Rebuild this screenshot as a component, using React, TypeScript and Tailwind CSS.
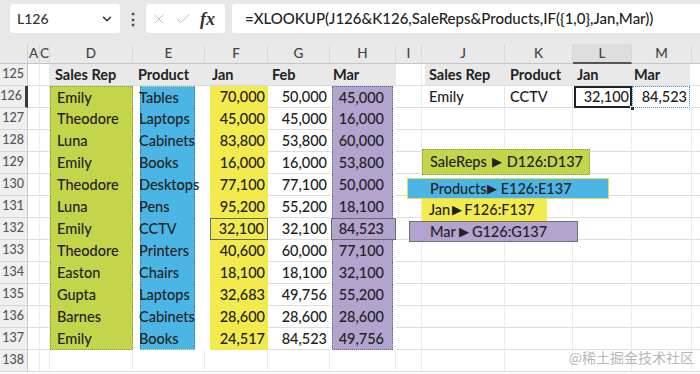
import React from "react";
import { ChevronDown, X, Check } from "lucide-react";

const GRID =
  "grid grid-cols-[28px_12px_10px_83px_72px_63px_62px_66px_26px_83px_68px_59px_60px_8px]";

const data: string[][] = [
  ["Emily", "Tables", "70,000", "50,000", "45,000"],
  ["Theodore", "Laptops", "45,000", "45,000", "16,000"],
  ["Luna", "Cabinets", "83,800", "53,800", "60,000"],
  ["Emily", "Books", "16,000", "16,000", "53,800"],
  ["Theodore", "Desktops", "77,100", "77,100", "50,000"],
  ["Luna", "Pens", "95,200", "55,200", "18,100"],
  ["Emily", "CCTV", "32,100", "32,100", "84,523"],
  ["Theodore", "Printers", "40,600", "60,000", "77,100"],
  ["Easton", "Chairs", "18,100", "18,100", "32,100"],
  ["Gupta", "Laptops", "32,683", "49,756", "55,200"],
  ["Barnes", "Cabinets", "28,600", "28,600", "28,600"],
  ["Emily", "Books", "24,517", "84,523", "49,756"],
];

function RowHead({ n, sel }: { n: number; sel?: boolean }) {
  return (
    <div
      className={
        "h-[22px] bg-[#efefef] border-b border-[#d6d6d6] flex items-center justify-end pr-[3px] text-[12.5px] text-[#555] " +
        (sel ? "border-r-[3px] border-r-[#3a3a3a]" : "border-r border-r-[#c9c9c9]")
      }
    >
      {n}
    </div>
  );
}

function Blank({ noRight }: { noRight?: boolean }) {
  return (
    <div
      className={
        "h-[22px] border-b border-[#dedede] " + (noRight ? "" : "border-r border-r-[#ececec]")
      }
    />
  );
}

function ColHead({ l, sel }: { l: string; sel?: boolean }) {
  return (
    <div
      className={
        "h-[20px] flex items-center justify-center text-[13.5px] text-[#444] border-r border-r-[#d9d9d9] " +
        (sel ? "bg-[#dedede] border-b-2 border-b-[#555]" : "border-b border-b-[#c6c2d2]")
      }
    >
      {l}
    </div>
  );
}

export default function App() {
  return (
    <div className="w-[700px] h-[374px] overflow-hidden relative bg-white font-['Lato',sans-serif] font-medium text-[#222]">
      {/* formula bar */}
      <div className="h-[44px] bg-[#e8e8e8] flex items-start pt-[4px] pl-[10px]">
        <div className="w-[110px] h-[29px] bg-white rounded-[3px] flex items-center justify-between pl-[7px] pr-[6px]">
          <span className="text-[14px] text-[#333]">L126</span>
          <ChevronDown size={14} strokeWidth={2.6} color="#333" />
        </div>
        <div className="w-[26px] h-[29px] flex items-center justify-center text-[16px] font-bold text-[#444]">⋮</div>
        <div className="w-[79px] h-[29px] bg-white rounded-[3px] flex items-center pl-[5px]">
          <X size={16} strokeWidth={1.2} color="#b4b4b4" />
          <Check size={18} strokeWidth={1.2} color="#b4b4b4" className="ml-[7px]" />
          <span className="ml-[8px] font-['Liberation_Serif',serif] italic font-bold text-[18px] text-[#333] leading-none">
            fx
          </span>
        </div>
        <div className="ml-[7px] flex-1 h-[29px] bg-white rounded-l-[3px] flex items-center pl-[13px] text-[15px] text-[#222] whitespace-nowrap">
          =XLOOKUP(J126&amp;K126,SaleReps&amp;Products,IF({"{"}1,0{"}"},Jan,Mar))
        </div>
      </div>

      {/* column headers */}
      <div className={GRID + " bg-[#e9e9e9]"}>
        <div className="h-[20px] border-b border-b-[#c6c2d2] border-r border-r-[#d0d0d0]" />
        <ColHead l="A" />
        <ColHead l="C" />
        <ColHead l="D" />
        <ColHead l="E" />
        <ColHead l="F" />
        <ColHead l="G" />
        <ColHead l="H" />
        <ColHead l="I" />
        <ColHead l="J" />
        <ColHead l="K" />
        <ColHead l="L" sel />
        <ColHead l="M" />
        <div className="h-[20px] border-b border-b-[#c6c2d2]" />
      </div>

      {/* row 125 */}
      <div className={GRID}>
        <RowHead n={125} />
        <Blank />
        <Blank />
        <div className="h-[22px] bg-[#e9e9e9] border-b border-[#d8d8d8] flex items-center pl-[5px] text-[14.5px] font-bold">Sales Rep</div>
        <div className="h-[22px] bg-[#e9e9e9] border-b border-[#d8d8d8] flex items-center pl-[5px] text-[14.5px] font-bold">Product</div>
        <div className="h-[22px] bg-[#e9e9e9] border-b border-[#d8d8d8] flex items-center pl-[7px] text-[14.5px] font-bold">Jan</div>
        <div className="h-[22px] bg-[#e9e9e9] border-b border-[#d8d8d8] flex items-center pl-[4px] text-[14.5px] font-bold">Feb</div>
        <div className="h-[22px] bg-[#e9e9e9] border-b border-[#d8d8d8] flex items-center pl-[3px] text-[14.5px] font-bold">Mar</div>
        <Blank />
        <div className="h-[22px] pl-[3px] border-b border-[#dedede]">
          <div className="h-full bg-[#e9e9e9] flex items-center pl-[4px] text-[14.5px] font-bold">Sales Rep</div>
        </div>
        <div className="h-[22px] bg-[#e9e9e9] border-b border-[#dedede] flex items-center pl-[5px] text-[14.5px] font-bold">Product</div>
        <div className="h-[22px] bg-[#e9e9e9] border-b border-[#dedede] flex items-center pl-[4px] text-[14.5px] font-bold">Jan</div>
        <div className="h-[22px] pr-[2px] border-b border-[#dedede]">
          <div className="h-full bg-[#e9e9e9] flex items-center pl-[2px] text-[14.5px] font-bold">Mar</div>
        </div>
        <Blank noRight />
      </div>

      {/* data rows */}
      {data.map((r, i) => {
        const n = 126 + i;
        const first = i === 0;
        const last = i === data.length - 1;
        const hl = n === 132;
        return (
          <div key={n} className={GRID}>
            <RowHead n={n} sel={first} />
            <Blank />
            <Blank />
            {/* D green */}
            <div
              className={
                "h-[22px] bg-[#c4d54c] flex items-center pl-[6px] text-[14.5px] border-x border-dotted border-x-[#8c9a3c] " +
                (first ? "border-t border-t-[#8c9a3c] border-dotted " : "") +
                (last ? "border-b border-b-[#8c9a3c] border-dotted" : "")
              }
            >
              {r[0]}
            </div>
            {/* E blue */}
            <div className="h-[22px]">
              <div
                className={
                  "ml-[7px] w-[55px] h-full bg-[#4bb5e5] flex items-center text-[14.5px] whitespace-nowrap border-x border-dotted border-x-[#3d7fa3] " +
                  (first ? "border-t border-t-[#e8e25a] " : "") +
                  (last ? "border-b border-b-[#e8e25a]" : "")
                }
              >
                <span className="-ml-[2px]">{r[1]}</span>
              </div>
            </div>
            {/* F yellow */}
            <div className="h-[22px]">
              <div
                className={
                  "ml-[5px] h-full bg-[#f3ea4d] flex items-center justify-end pr-[3px] text-[14.5px] " +
                  (hl ? "border-[1.5px] border-[#6b6b6b]" : "")
                }
              >
                {r[2]}
              </div>
            </div>
            {/* G white */}
            <div className="h-[22px] border-b border-[#dedede] flex items-center justify-end pr-[3px] text-[14.5px]">
              {r[3]}
            </div>
            {/* H purple */}
            <div className="h-[22px]">
              <div
                className={
                  "h-full bg-[#b3a3cf] flex items-center justify-end text-[14.5px] " +
                  (hl
                    ? "ml-[1px] pr-[11px] border-[1.5px] border-[#6b6b6b]"
                    : "ml-[2px] mr-[3px] pr-[8px] border-x border-dotted border-x-[#6f6680] ") +
                  (first ? "border-t border-t-[#6f6680] " : "") +
                  (last ? "border-b border-b-[#6f6680] border-dotted" : "")
                }
              >
                {r[4]}
              </div>
            </div>
            <Blank />
            {first ? (
              <>
                <div className="h-[22px] border-b border-[#dedede] border-r border-r-[#e6e6e6] flex items-center pl-[7px] text-[14.5px]">Emily</div>
                <div className="h-[22px] border-b border-[#dedede] border-r border-r-[#e6e6e6] flex items-center pl-[5px] text-[14.5px]">CCTV</div>
                <div className="h-[22px] relative">
                  <div className="h-full ml-[1px] border-2 border-[#222] flex items-center justify-end pr-[1px] text-[14.5px]">32,100</div>
                  <div className="absolute right-[-3px] bottom-[-3px] w-[5px] h-[5px] bg-[#333] border border-white" />
                </div>
                <div className="h-[22px] pr-[2px]">
                  <div className="h-full border border-dotted border-[#3f8fd6] flex items-center justify-end pr-[2px] text-[14.5px]">84,523</div>
                </div>
                <Blank noRight />
              </>
            ) : (
              <>
                <Blank />
                <Blank />
                <Blank />
                <Blank />
                <Blank noRight />
              </>
            )}
          </div>
        );
      })}

      {/* row 138 */}
      <div className={GRID}>
        <RowHead n={138} />
        <Blank />
        <Blank />
        <Blank />
        <Blank />
        <Blank />
        <Blank />
        <Blank />
        <Blank />
        <Blank />
        <Blank />
        <Blank />
        <Blank />
        <Blank noRight />
      </div>

      {/* shapes: named range labels */}
      <div className="absolute left-[422px] top-[149px] w-[168px] h-[26px] bg-[#c4d54c] border border-dotted border-[#8c9a3c] flex items-center pl-[7px] text-[14.5px] text-[#222] whitespace-nowrap">
        SaleReps <span className="mx-[5px] text-[13px]">▶</span> D126:D137
      </div>
      <div className="absolute left-[407px] top-[178px] w-[202px] h-[21px] bg-[#4bb5e5] border border-[#e3dc55] flex items-center pl-[22px] text-[14.5px] text-[#222] whitespace-nowrap">
        Products<span className="mr-[4px] text-[13px]">▶</span>E126:E137
      </div>
      <div className="absolute left-[422px] top-[199px] w-[125px] h-[22px] bg-[#f3ea4d] flex items-center pl-[7px] text-[14.5px] text-[#222] whitespace-nowrap">
        Jan<span className="mx-[2px] text-[13px]">▶</span>F126:F137
      </div>
      <div className="absolute left-[409px] top-[221px] w-[169px] h-[21px] bg-[#b3a3cf] border border-[#6f6f6f] flex items-center pl-[20px] text-[14.5px] text-[#222] whitespace-nowrap">
        Mar <span className="mx-[3px] text-[13px]">▶</span>G126:G137
      </div>

      {/* watermark */}
      <div className="absolute right-[6px] bottom-[6px] text-[14px] text-[#b8b8b8] font-['Noto_Sans_CJK_SC',sans-serif] font-normal whitespace-nowrap">
        @稀土掘金技术社区
      </div>
    </div>
  );
}
